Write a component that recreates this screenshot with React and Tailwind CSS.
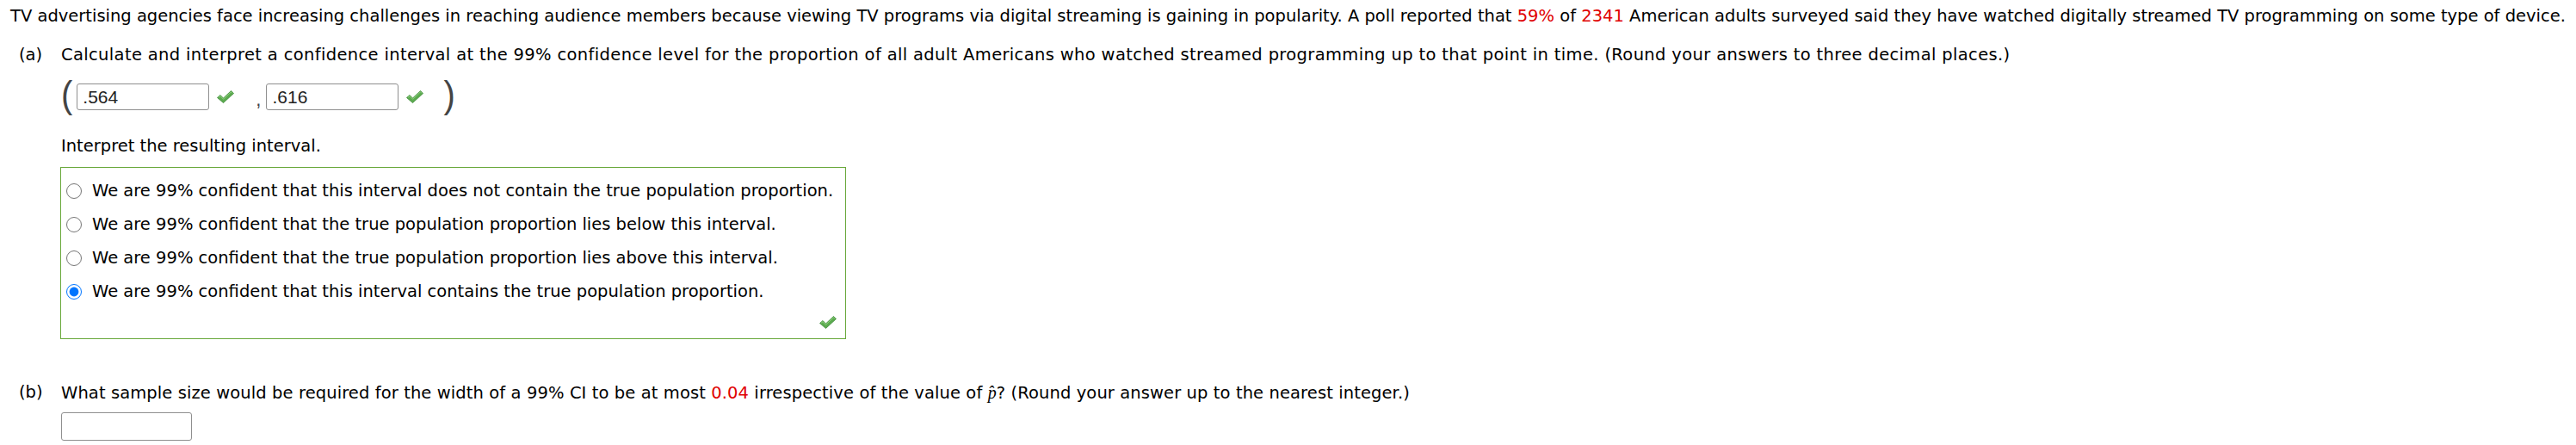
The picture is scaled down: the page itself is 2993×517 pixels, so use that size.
import React from "react";

const Check = ({ className = "" }) => (
  <svg viewBox="0 0 22 17" className={className} aria-hidden="true">
    <path
      d="M1.5 9.5 L5 6.5 L8.5 10 L17.5 1.5 L20.5 4.5 L8.5 15.5 Z"
      fill="#5cab4f"
      stroke="#3f8a3a"
      strokeWidth="0.8"
      strokeLinejoin="round"
    />
    <path d="M3 9.3 L5 7.7 L8.5 11.2 L17.5 2.8 L19 4.3" fill="none" stroke="#8fd17f" strokeWidth="1" />
  </svg>
);

const Red = ({ children }) => <span className="text-[#e00000]">{children}</span>;

const options = [
  "We are 99% confident that this interval does not contain the true population proportion.",
  "We are 99% confident that the true population proportion lies below this interval.",
  "We are 99% confident that the true population proportion lies above this interval.",
  "We are 99% confident that this interval contains the true population proportion.",
];

function AnswerBox({ value, className = "" }) {
  return (
    <div
      className={`h-[31px] border border-[#8f8f8f] rounded-[3px] bg-white flex items-center pl-[6px] text-[21px] text-[#222] font-['Liberation_Sans',Arial,sans-serif] ${className}`}
    >
      {value}
    </div>
  );
}

export default function App() {
  return (
    <div className="bg-white min-h-[517px] text-black font-['DejaVu_Sans',Verdana,sans-serif] text-[19.5px] leading-[24px] pl-3 pt-[7px] whitespace-nowrap">
      <p>
        TV advertising agencies face increasing challenges in reaching audience members because viewing TV programs via
        digital streaming is gaining in popularity. A poll reported that <Red>59%</Red> of <Red>2341</Red> American
        adults surveyed said they have watched digitally streamed TV programming on some type of device.
      </p>

      <div className="flex mt-[21px]">
        <span className="w-[59px] pl-[10px]">(a)</span>
        <div className="flex flex-col">
          <p className="tracking-[0.35px]">
            Calculate and interpret a confidence interval at the 99% confidence level for the proportion of all adult
            Americans who watched streamed programming up to that point in time. (Round your answers to three decimal
            places.)
          </p>

          <div className="flex items-center h-[41px] mt-[16px] font-['Liberation_Sans',Arial,sans-serif] text-[#444]">
            <span className="text-[40px] leading-[41px] font-light -mt-[4px] scale-y-110">(</span>
            <AnswerBox value=".564" className="w-[154px] ml-[5px]" />
            <Check className="w-[22px] h-[17px] ml-[8px]" />
            <span className="text-[22px] ml-[24px] mt-[6px]">,</span>
            <AnswerBox value=".616" className="w-[154px] ml-[6px]" />
            <Check className="w-[22px] h-[17px] ml-[8px]" />
            <span className="text-[40px] leading-[41px] font-light ml-[22px] -mt-[4px] scale-y-110">)</span>
          </div>

          <p className="mt-[25px]">Interpret the resulting interval.</p>

          <div className="mt-[12px] w-[913px] h-[200px] border border-[#68a83a] -ml-px flex flex-col pt-[7px] pl-[6px]">
            {options.map((text, i) => (
              <label key={i} className="flex items-center h-[39px]">
                <input
                  type="radio"
                  name="interp"
                  defaultChecked={i === 3}
                  className="w-[18px] h-[18px] m-0 accent-[#0075ff]"
                />
                <span className="ml-[12px]">{text}</span>
              </label>
            ))}
            <div className="flex justify-end pr-[9px] mt-[8px]">
              <Check className="w-[22px] h-[17px]" />
            </div>
          </div>
        </div>
      </div>

      <div className="flex mt-[50px]">
        <span className="w-[59px] pl-[10px]">(b)</span>
        <div className="flex flex-col">
          <p className="tracking-[0.1px]">
            What sample size would be required for the width of a 99% CI to be at most <Red>0.04</Red> irrespective of
            the value of{" "}
            <i className="font-['Liberation_Serif',serif] text-[20px]">p&#770;</i>? (Round your answer up to the nearest
            integer.)
          </p>
          <AnswerBox value="" className="w-[152px] h-[33px] mt-[10px]" />
        </div>
      </div>
    </div>
  );
}
